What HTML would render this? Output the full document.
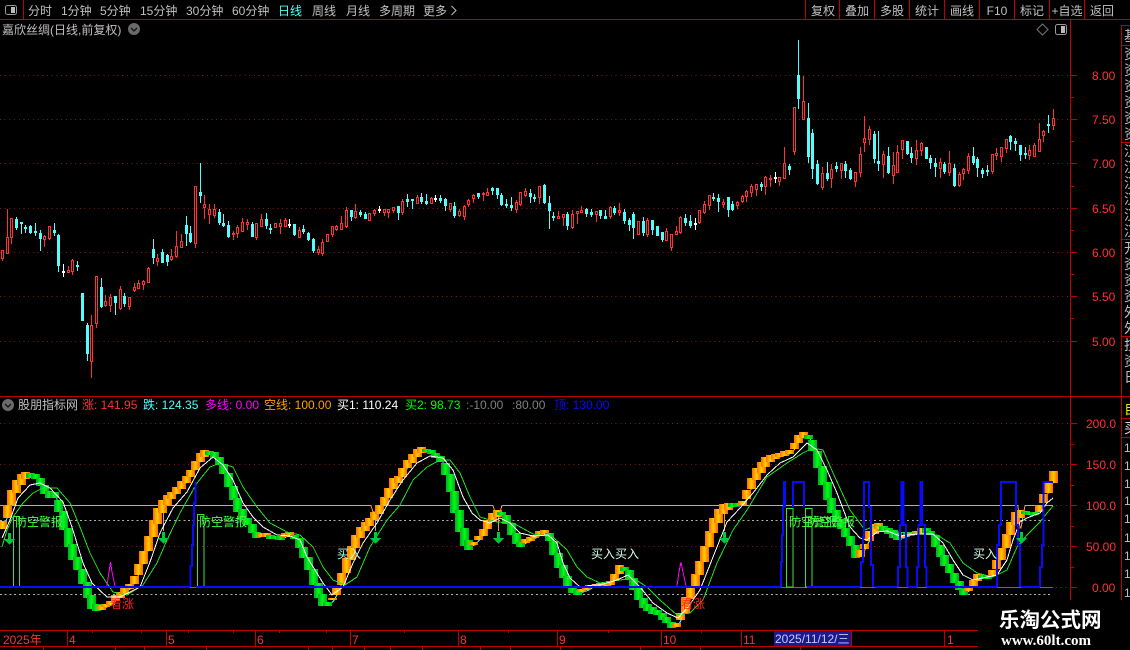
<!DOCTYPE html>
<html><head><meta charset="utf-8"><title>K</title>
<style>
html,body{margin:0;padding:0;background:#000;width:1130px;height:650px;overflow:hidden}
svg{display:block;position:absolute;left:0;top:0}
text{font-family:"Liberation Sans","WenQuanYi Zen Hei","Noto Sans CJK SC",sans-serif;font-size:12px;fill:#c0c0c0;white-space:pre}
.a{fill:#ff3232}
.l{stroke:#c00000;stroke-width:1;fill:none;shape-rendering:crispEdges}
.d{stroke:#801818;stroke-width:1;stroke-dasharray:1 3.7;fill:none;shape-rendering:crispEdges}
.g{stroke:#b0b0b0;stroke-width:1;stroke-dasharray:2 2.7;fill:none;shape-rendering:crispEdges}
.p{fill:none;stroke-width:1;shape-rendering:crispEdges}
.b{fill:none;stroke:#0a0aff;stroke-width:2;shape-rendering:crispEdges}
</style></head><body>
<svg xmlns="http://www.w3.org/2000/svg" width="1130" height="650" viewBox="0 0 1130 650">
<defs>
<linearGradient id="o" x1="0" x2="1" y1="0" y2="0"><stop offset="0" stop-color="#ff6a00"/><stop offset=".5" stop-color="#ffd000"/><stop offset="1" stop-color="#ff6000"/></linearGradient>
<linearGradient id="n" x1="0" x2="1" y1="0" y2="0"><stop offset="0" stop-color="#00a828"/><stop offset=".5" stop-color="#00ff10"/><stop offset="1" stop-color="#00a828"/></linearGradient>
</defs>
<rect width="1130" height="650" fill="#000"/>

<!-- top bar -->
<path class="l" d="M0 19.5H1130M23.5 0V19.5M805.5 0V19M839.5 0V19M874.5 0V19M909.5 0V19M944.5 0V19M979.5 0V19M1014.5 0V19M1049.5 0V19M1084.5 0V19"/>
<rect x="5.5" y="5.5" width="11" height="9" rx="2" fill="none" stroke="#999"/>
<rect x="11" y="7" width="4" height="6" fill="#bbb"/>
<text x="28" y="15">分时</text><text x="61" y="15">1分钟</text><text x="100" y="15">5分钟</text><text x="140" y="15">15分钟</text><text x="186" y="15">30分钟</text><text x="232" y="15">60分钟</text>
<text x="278" y="15" style="fill:#54fcfc">日线</text><text x="312" y="15">周线</text><text x="346" y="15">月线</text><text x="379" y="15">多周期</text><text x="423" y="15">更多</text>
<path d="M451.5 6L456 10.5L451.5 15" fill="none" stroke="#c0c0c0"/>
<g text-anchor="middle"><text x="823" y="15">复权</text><text x="857" y="15">叠加</text><text x="892" y="15">多股</text><text x="927" y="15">统计</text><text x="962" y="15">画线</text><text x="997" y="15">F10</text><text x="1032" y="15">标记</text><text x="1067" y="15">+自选</text><text x="1102" y="15">返回</text></g>

<!-- title -->
<text x="2" y="34">嘉欣丝绸(日线,前复权)</text>
<circle cx="134" cy="29" r="6" fill="#6a6a6a"/><path d="M131 28L134 31L137 28" fill="none" stroke="#111" stroke-width="1.3"/>
<path d="M1042.5 24L1048 29.5L1042.5 35L1037 29.5Z" fill="none" stroke="#777"/>
<rect x="1055.5" y="24.5" width="11" height="10" rx="2" fill="none" stroke="#999"/><rect x="1061" y="26" width="4" height="7" fill="#bbb"/>

<!-- axes -->
<path class="l" d="M1070.5 19V600M1121.5 25V600M1122 25.5H1130M1122 45.5H1130M1122 142.5H1130M1122 239.5H1130M1122 336.5H1130M0 396.5H1130M1122 418.5H1130M1122 437.5H1130"/>
<path class="l" d="M1071 75.5H1077M1071 119.5H1077M1071 163.5H1077M1071 208.5H1077M1071 252.5H1077M1071 296.5H1077M1071 341.5H1077M1071 97.5H1074M1071 141.5H1074M1071 186.5H1074M1071 230.5H1074M1071 274.5H1074M1071 318.5H1074M1071 423.5H1077M1071 464.5H1077M1071 505.5H1077M1071 546.5H1077M1071 587.5H1077M1071 444.5H1074M1071 485.5H1074M1071 526.5H1074M1071 567.5H1074"/>
<path class="d" d="M0 75.5H1068M0 119.5H1068M0 163.5H1068M0 208.5H1068M0 252.5H1068M0 296.5H1068M0 341.5H1068M0 423.5H1068M0 464.5H1068M0 546.5H1068M1056 505.5H1068M1056 587.5H1068"/>
<text class="a" x="1092" y="80">8.00</text><text class="a" x="1092" y="124">7.50</text><text class="a" x="1092" y="168">7.00</text><text class="a" x="1092" y="213">6.50</text><text class="a" x="1092" y="257">6.00</text><text class="a" x="1092" y="301">5.50</text><text class="a" x="1092" y="346">5.00</text>
<text class="a" x="1086" y="428">200.0</text><text class="a" x="1086" y="469">150.0</text><text class="a" x="1086" y="510">100.0</text><text class="a" x="1086" y="551">50.00</text><text class="a" x="1092" y="592">0.00</text>

<!-- right side column -->
<text x="1124" y="41" style="font-size:14px">基</text>
<text x="1124" y="59" style="font-size:14px">资</text><text x="1124" y="75" style="font-size:14px">资</text><text x="1124" y="91" style="font-size:14px">资</text><text x="1124" y="107" style="font-size:14px">资</text><text x="1124" y="123" style="font-size:14px">资</text><text x="1124" y="139" style="font-size:14px">资</text>
<text x="1124" y="156" style="font-size:14px">汉</text><text x="1124" y="172" style="font-size:14px">汉</text><text x="1124" y="188" style="font-size:14px">汉</text><text x="1124" y="204" style="font-size:14px">汉</text><text x="1124" y="220" style="font-size:14px">汉</text><text x="1124" y="236" style="font-size:14px">汉</text>
<text x="1124" y="253" style="font-size:14px">开</text><text x="1124" y="269" style="font-size:14px">资</text><text x="1124" y="285" style="font-size:14px">资</text><text x="1124" y="301" style="font-size:14px">资</text><text x="1124" y="317" style="font-size:14px">外</text><text x="1124" y="333" style="font-size:14px">外</text>
<text x="1124" y="350" style="font-size:14px">技</text><text x="1124" y="366" style="font-size:14px">资</text><text x="1124" y="382" style="font-size:14px">日</text>
<text x="1124" y="414" style="font-size:14px;fill:#e8e800">自</text><text x="1124" y="433" style="font-size:14px;fill:#ddd">买</text>
<text x="1124" y="452">1</text><text x="1124" y="470">1</text><text x="1124" y="488">1</text><text x="1124" y="505">1</text><text x="1124" y="523">1</text><text x="1124" y="542">1</text><text x="1124" y="560">1</text><text x="1124" y="578">1</text><text x="1124" y="597">1</text>

<g id="c"></g>

<!-- indicator title -->
<circle cx="8" cy="405" r="6" fill="#6a6a6a"/><path d="M5 404L8 407L11 404" fill="none" stroke="#111" stroke-width="1.3"/>
<text x="18" y="409">股朋指标网</text>
<text x="82" y="409" style="fill:#ff3232">涨: 141.95</text>
<text x="143" y="409" style="fill:#54fcfc">跌: 124.35</text>
<text x="205" y="409" style="fill:#ff00ff">多线: 0.00</text>
<text x="264" y="409" style="fill:#ffa000">空线: 100.00</text>
<text x="337" y="409" style="fill:#fff">买1: 110.24</text>
<text x="405" y="409" style="fill:#00ff00">买2: 98.73</text>
<text x="466" y="409" style="fill:#808080">:-10.00</text>
<text x="512" y="409" style="fill:#808080">:80.00</text>
<text x="554" y="409" style="fill:#0a0aff">顶: 130.00</text>

<!-- indicator fixed lines -->
<path class="g" d="M0 520.5H1053M0 594.5H1053"/>
<path class="p" stroke="#f0a040" d="M0 505.5H371L373 512H377L379 505.5H493L495 512H500L502 505.5H1018L1020 528H1021L1025 505.5H1053"/>
<path class="p" stroke="#e0a040" d="M163.5 500V531M375.5 512V531M498.5 512V531M724.5 513V531"/>
<path class="p" stroke="#ff00ff" d="M190 587.5H1053"/>

<g id="k"></g>

<polyline class="p" stroke="#20e020" points="2,547 7,530 13,517 23,503 33,493 43,488 57,488 70,503 80,527 90,553 100,573 113,592 127,595 143,585 157,563 167,540 180,513 197,483 210,467 220,463 233,467 243,487 257,507 270,523 287,532 300,535 313,547 323,567 333,580 345,585 357,577 370,547 387,520 400,505 413,480 427,467 440,460 450,460 460,473 470,497 480,517 497,522 513,523 533,534 553,537 567,550 577,567 587,577 600,583 620,580 633,578 647,587 660,600 677,615 690,613 703,600 717,563 733,530 747,510 767,477 787,463 803,453 813,448 823,450 833,473 850,510 865,530 877,525 893,532 917,533 937,535 950,543 963,563 977,573 993,577 1007,570 1017,547 1027,535 1040,522 1047,513 1053,506"/>
<polyline class="p" stroke="#fff" points="2,538 10,520 18,498 30,485 40,483 50,488 63,502 72,527 83,563 92,583 107,597 120,597 140,587 150,562 160,533 173,508 187,492 200,468 213,457 223,465 233,480 243,503 253,517 263,527 277,535 290,536 300,540 307,557 315,570 323,583 332,595 343,587 353,563 363,543 377,523 390,500 403,480 417,463 430,456 443,458 453,470 463,497 472,513 480,520 490,523 500,518 510,523 520,533 533,536 548,535 557,543 563,563 570,578 580,587 593,585 600,585 617,580 628,575 640,587 653,603 667,613 678,618 688,607 700,590 713,557 727,522 740,508 753,493 767,475 780,463 793,457 807,443 817,450 827,470 837,493 850,527 860,538 867,540 877,532 887,531 900,536 917,534 933,534 943,543 953,560 963,575 973,580 987,577 997,575 1007,560 1013,540 1020,522 1027,518 1040,513 1047,503 1053,498"/>

<!-- magenta spikes -->
<path class="p" stroke="#ff00ff" d="M107 586L109 572L110.5 562L112 572L115 586M677 586L679 572L681 562L683 572L686 586"/>

<!-- alarm boxes -->
<path class="p" stroke="#40e040" d="M13.5 587V516.5H19.5V587ZM197.5 587V514.5H204V587ZM786.5 587V508.5H793V587ZM805.5 587V508.5H812V587Z"/>

<!-- blue -->
<path class="b" d="M0 587H190M196 587H781M807 587H860M875 587H897M908 587H917M927 587H997M1021 587H1040"/>
<path class="b" d="M190.5 587V566H192V545H193V525H194V503H195.5V482"/>
<path class="b" d="M781 587V562H782V535H783V507H784V482H785V507M793 507V482H804V507"/>
<path class="b" d="M861 587V562H863V537H864V482H869V507H871V565H873V587"/>
<path class="b" d="M898 587V567H900V525H901.5V482H903.5V525H906V567H907.5V587"/>
<path class="b" d="M917 587V567H918.5V525H920.5V482H922V525H925V567H926.5V587"/>
<path class="b" d="M997 587V545H999V525H1001V482H1016V525H1018V545H1020V587"/>
<path class="b" d="M1040 587V567H1042V545H1043.5V482H1053"/>

<!-- arrows -->
<g fill="#00c838" shape-rendering="crispEdges">
<path d="M8 533h3v6h4l-5.500 6l-5.500-6h4z"/><path d="M162 532h3v6h4l-5.500 6l-5.500-6h4z"/><path d="M374 532h3v6h4l-5.500 6l-5.500-6h4z"/><path d="M497 532h3v6h4l-5.500 6l-5.500-6h4z"/><path d="M723 532h3v6h4l-5.500 6l-5.500-6h4z"/><path d="M1020 532h3v6h4l-5.500 6l-5.500-6h4z"/>
</g>

<!-- labels on chart -->
<text x="15" y="526" style="fill:#40ff40">防空警报</text><text x="199" y="526" style="fill:#40ff40">防空警报</text><text x="789" y="526" style="fill:#40ff40">防空警报</text><text x="807" y="526" style="fill:#40ff40">防空警报</text>
<text x="337" y="558" style="fill:#b0ffe0">买入</text><text x="591" y="558" style="fill:#d0fff0">买入买入</text><text x="973" y="558" style="fill:#d0fff0">买入</text>
<text x="110" y="608" style="fill:#ff2020">看涨</text><text x="681" y="608" style="fill:#ff2020">看涨</text>

<!-- timeline -->
<path class="l" d="M0 630.500H978M0 646.500H978M67.500 630V646M166.500 630V646M255.500 630V646M350.500 630V646M458.500 630V646M557.500 630V646M661.500 630V646M741.500 630V646M944.500 630V646M92.500 631V633M141.500 631V633M188.500 631V633M233.500 631V633M279.500 631V633M326.500 631V633M404.500 631V633M508.500 631V633M608.500 631V633M701.500 631V633M43.500 647V650M115.500 647V650M144.500 647V650M206.500 647V650M308.500 647V650M332.500 647V650M364.500 647V650M390.500 647V650M422.500 647V650M480.500 647V650M510.500 647V650M560.500 647V650M640.500 647V650M700.500 647V650M800.500 647V650"/>
<text class="a" x="3" y="644">2025年</text><text class="a" x="69" y="644">4</text><text class="a" x="168" y="644">5</text><text class="a" x="257" y="644">6</text><text class="a" x="352" y="644">7</text><text class="a" x="460" y="644">8</text><text class="a" x="559" y="644">9</text><text class="a" x="663" y="644">10</text><text class="a" x="743" y="644">11</text><text class="a" x="947" y="644">1</text>
<rect x="774" y="631" width="77" height="15" fill="#1a1a8c"/><path class="l" d="M851.500 630V646"/>
<text x="775" y="643" style="fill:#c8c8ff">2025/11/12/三</text>

<!-- watermark -->
<rect x="978" y="600" width="152" height="50" fill="#000"/>
<text x="999" y="627" style="font-size:20.500px;font-weight:bold;fill:#fff;font-family:'Noto Sans CJK SC',sans-serif">乐淘公式网</text>
<text x="1001" y="645" style="font-size:15px;font-weight:bold;fill:#fff;font-family:'Liberation Serif',serif">www.60lt.com</text>
</svg>
<script>
var C="R250,250,258,260 R209,237,253,253 R218,218,237,243 C217,219,227,229 C222,222,223,233 C225,227,228,232 C225,226,232,233 C223,231,232,235 C230,233,238,250 R235,236,239,246 R226,226,238,239 C223,230,232,235 C234,235,265,271 W264,271,272,276 R266,270,272,272 R259,260,271,274 C261,265,266,270 C293,293,320,320 C323,325,353,360 R315,325,361,377 R276,276,323,327 C278,287,306,307 R295,301,305,306 R294,297,305,311 C296,296,302,314 R286,289,308,309 C293,296,303,306 R297,297,306,309 R283,287,290,291 R280,283,288,288 R280,281,284,289 R267,268,282,282 C239,249,257,263 R254,258,261,265 C249,252,262,262 C254,255,261,265 R249,256,259,260 R231,246,256,257 R234,241,247,247 C216,225,233,245 C226,233,241,242 R186,186,243,247 C163,192,195,202 R195,204,207,218 R204,209,214,223 R204,209,215,217 C209,212,222,224 C214,223,225,226 C221,225,236,237 R231,233,234,239 R225,227,233,237 R218,222,231,231 R219,222,224,229 C222,224,236,236 R223,223,237,239 R214,219,226,226 C213,219,225,228 C224,228,229,233 R223,223,227,227 R219,223,226,233 R218,220,226,226 W219,224,225,227 C224,224,234,235 R227,230,237,237 C225,229,231,233 C232,233,239,240 C238,239,250,252 R246,249,252,254 R239,242,253,255 R234,234,241,241 R226,226,234,236 R225,226,229,230 R216,223,229,229 R207,210,226,227 C210,210,216,220 R204,211,217,218 C210,212,214,216 C212,214,218,218 R213,213,220,220 R209,210,213,215 W206,209,210,212 R209,209,212,215 R209,209,212,217 R207,207,210,212 C206,206,212,219 R199,201,212,214 C194,199,201,206 C199,199,200,208 R195,197,203,203 C193,197,201,203 C194,201,203,204 R197,198,203,203 W195,198,199,201 C195,198,200,202 C198,199,205,210 R203,203,209,211 C202,206,215,217 R209,211,215,216 R205,206,216,219 R199,200,204,206 R194,195,198,202 C193,193,196,198 R192,193,194,200 R188,192,195,195 C187,188,190,194 C188,188,194,198 C193,195,204,205 C199,204,205,207 C197,205,207,210 R200,202,209,212 R192,192,204,205 R188,191,195,196 C189,193,196,202 C194,197,198,201 R186,186,197,203 C184,185,202,203 C196,203,210,228 C212,216,217,220 R211,216,218,218 R214,214,217,225 C212,214,225,229 R210,214,227,228 R211,211,213,223 R206,210,212,212 C208,209,213,216 C209,212,214,216 R211,211,214,221 C210,210,215,218 C210,216,218,218 R206,207,216,218 C206,208,212,214 R203,210,212,215 C209,212,220,223 C218,220,224,230 C212,214,227,238 R221,221,234,234 C217,221,232,235 R218,220,234,236 C220,220,229,234 C226,226,235,235 C232,232,239,241 R228,231,240,240 R234,234,247,250 R226,231,234,234 R216,217,232,233 C214,218,222,225 C215,221,225,227 W218,223,224,229 R210,210,222,223 R201,204,212,213 R195,195,205,209 C193,197,198,200 C194,198,201,211 R199,202,204,207 C197,197,209,216 C201,204,209,210 R201,202,205,208 R195,196,201,202 R190,191,196,201 R184,186,192,196 R184,184,189,195 C182,184,186,190 R176,177,186,194 R175,178,179,186 W172,177,178,182 R177,177,181,185 R147,163,178,178 C164,166,169,174 R107,107,151,154 C40,75,98,108 R76,101,119,119 C103,118,156,162 C129,133,168,178 C160,164,183,184 R167,173,187,189 C162,173,178,180 R164,169,178,187 C162,166,168,171 R163,163,170,178 C161,164,170,177 C168,170,178,179 R172,172,181,186 R147,154,172,176 R116,138,142,151 R126,129,139,144 C131,134,158,162 C131,161,163,170 R151,154,164,177 C147,156,172,173 R152,165,175,183 R145,152,172,172 R140,140,149,158 C141,141,153,154 C147,153,157,162 R140,150,158,164 R142,143,150,155 C147,147,158,158 C155,158,162,168 C158,163,166,176 R158,162,168,177 C162,164,171,173 R151,163,172,175 C164,168,185,186 R172,174,185,186 R168,169,173,179 R153,156,170,173 C147,156,162,164 C157,159,167,176 C168,170,173,177 C165,170,171,175 R154,154,171,173 R148,153,155,159 R147,147,156,161 R139,139,148,152 C135,136,141,149 C138,141,143,150 C145,145,154,160 C147,153,154,158 R145,150,155,159 R143,145,156,156 R123,139,151,151 R130,131,135,141 C115,124,125,132 R109,118,125,129".split(" ");
var B="O521,528 O505,517 O490,504 O480,492 O474,484 O472,478 G473,477 G474,478 G478,485 G485,493 G491,497 G492,497 G500,511 G511,529 G528,546 G544,559 G557,569 G569,583 G582,597 G595,608 G604,610 O605,609 O604,606 O601,604 O595,600 O592,597 O588,593 O584,588 O576,583 O564,574 O551,563 O536,550 O520,536 O508,523 O500,512 O495,504 O492,498 O487,493 O481,488 O476,482 O470,476 O461,469 O453,461 O450,456 G451,454 G452,457 G457,464 G464,473 G473,486 G486,499 G498,511 G509,519 G518,524 G524,532 G532,537 O533,536 O533,536 G535,538 G536,538 G536,539 O533,536 O532,536 G535,538 G538,547 G547,557 G557,569 G569,584 G583,597 G594,605 G602,605 O598,599 O588,594 O573,584 O558,572 O546,559 O535,547 O527,537 O522,530 O518,525 O512,519 O505,513 O497,505 O488,497 O478,488 O476,482 O468,476 O460,467 O454,462 O449,456 O447,452 G449,451 G450,453 G453,457 G456,461 G463,474 G474,491 G491,512 G510,531 G528,545 G540,549 O542,544 O536,539 O529,535 O520,528 O513,521 O510,516 G512,514 G515,523 G523,534 G533,543 G542,546 O539,542 O537,540 O535,537 O531,535 O530,533 G533,540 G541,554 G553,567 G565,577 G576,587 G587,592 G590,594 O589,591 O588,589 O585,586 O584,585 O583,586 O584,586 O581,584 O574,580 O565,573 G567,570 G570,579 G578,589 G587,599 G598,607 G604,610 G607,613 G610,614 G613,619 G617,622 G622,627 O623,626 O613,619 O597,612 O587,598 O574,586 O561,574 O546,561 O531,546 O518,532 O509,522 O504,513 O503,509 G503,506 G503,505 O501,504 O490,498 O478,488 O468,479 O462,472 O457,466 O455,461 O454,458 O453,456 O451,455 O450,453 O443,448 O435,442 O432,437 G435,438 G440,450 G451,467 G466,484 G482,499 G498,512 G510,521 G519,528 G528,536 G536,545 G545,557 O550,556 O544,548 O531,540 O524,533 O523,528 G526,531 G528,533 G530,537 G533,539 O535,537 G533,535 O532,534 O531,533 O528,532 G528,533 G531,534 G535,546 G545,556 G555,565 G564,572 G573,582 G581,589 G589,594 O587,590 O580,585 O574,580 G575,578 G575,578 O570,574 O560,568 O548,559 O534,547 O522,534 O512,524 O510,517 G511,513 G512,514 G512,514 O505,511 O494,502 O482,492 O471,482".split(" ");
function X(i){return Math.floor(2.3+4.713*i)}
var h='';
C.forEach(function(s,i){
 var t=s[0],v=s.slice(1).split(",").map(Number),x=X(i),f=t=="R"?"#ff3232":t=="C"?"#54fcfc":"#fff";
 h+='<rect x="'+x+'" y="'+v[0]+'" width="1" height="'+(v[3]-v[0]+1)+'" fill="'+f+'"/>';
 h+='<rect x="'+(x-1)+'" y="'+v[1]+'" width="3" height="'+Math.max(1,v[2]-v[1]+1)+'" fill="'+f+'"/>';
 if(t=="R"&&v[2]-v[1]>=2)h+='<rect x="'+x+'" y="'+(v[1]+1)+'" width="1" height="'+(v[2]-v[1]-1)+'" fill="#000"/>';
});
document.getElementById("c").innerHTML=h;
h='';var p=[];
B.forEach(function(s,i){var v=s.slice(1).split(",").map(Number);p.push((X(i)+2)+","+((v[0]+v[1])/2+2))});
h+='<polyline class="p" stroke="#54fcfc" points="'+p.join(" ")+'"/>';
B.forEach(function(s,i){
 var t=s[0],v=s.slice(1).split(",").map(Number),x=X(i);
 h+='<rect x="'+(x-4)+'" y="'+v[0]+'" width="9" height="'+(v[1]-v[0]+1)+'" fill="url(#'+(t=="O"?"o":"n")+')" shape-rendering="crispEdges"/>';
});
document.getElementById("k").innerHTML=h;
</script>
</body></html>
